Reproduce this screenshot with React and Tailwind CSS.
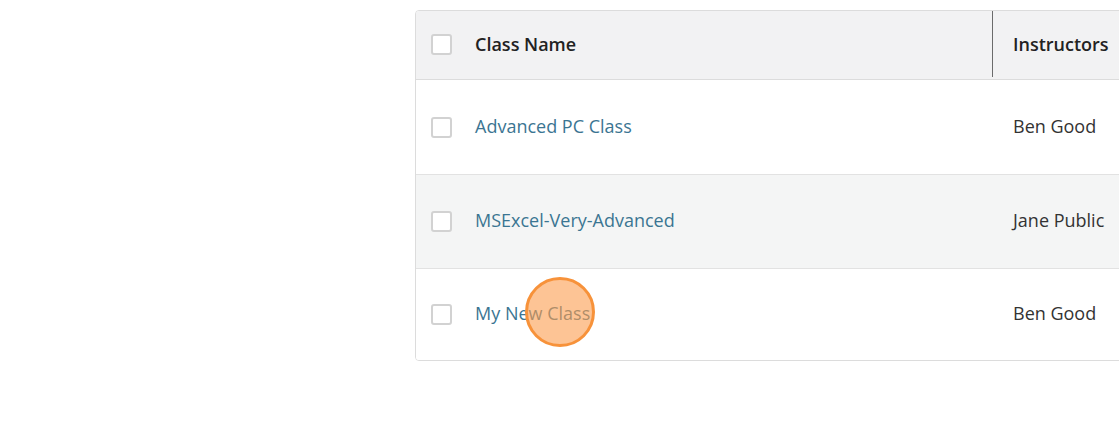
const rows = [
  { name: 'Advanced PC Class', instructor: 'Ben Good', h: 'h-[95px]', bg: 'bg-white' },
  { name: 'MSExcel-Very-Advanced', instructor: 'Jane Public', h: 'h-[94px]', bg: 'bg-[#f4f5f5]' },
  { name: 'My New Class', instructor: 'Ben Good', h: 'h-[91px]', bg: 'bg-white' },
]

function Checkbox() {
  return <span className="block w-[21px] h-[21px] rounded-[3px] border-2 border-[#d2d2d2] bg-white shrink-0" />
}

export default function App() {
  return (
    <div className="w-[1119px] h-[444px] overflow-hidden bg-white font-['Open_Sans',sans-serif]">
      <div className="pl-[415px] pt-[10px]">
        <div className="relative w-[760px] border border-[#dcdcdc] rounded-[4px] overflow-hidden">
          <div className="flex h-[69px] pb-[2px] bg-[#f2f2f3] border-b border-[#dcdcdc]">
            <div className="flex items-center w-[577px] pl-[15px] border-r border-[#6b6b6b]">
              <Checkbox />
              <span className="ml-[23px] text-[18px] font-semibold text-[#222]">Class Name</span>
            </div>
            <div className="flex items-center pl-[20px] text-[18px] font-semibold text-[#222]">Instructors</div>
          </div>
          {rows.map((r, i) => (
            <div key={r.name} className={`flex pb-[2px] ${r.h} ${r.bg} ${i < rows.length - 1 ? 'border-b border-[#e2e2e2]' : ''}`}>
              <div className="flex items-center w-[577px] pl-[15px]">
                <span className="pt-[2px]"><Checkbox /></span>
                <span className="ml-[23px] text-[18px] text-[#3b7592]">{r.name}</span>
              </div>
              <div className="flex items-center pl-[20px] text-[18px] text-[#333]">{r.instructor}</div>
            </div>
          ))}
          <div className="absolute left-[109px] top-[266px] w-[70px] h-[70px] rounded-full border-[3px] border-[#f7923a] bg-[#fb9c4f]/60" />
        </div>
      </div>
    </div>
  )
}
